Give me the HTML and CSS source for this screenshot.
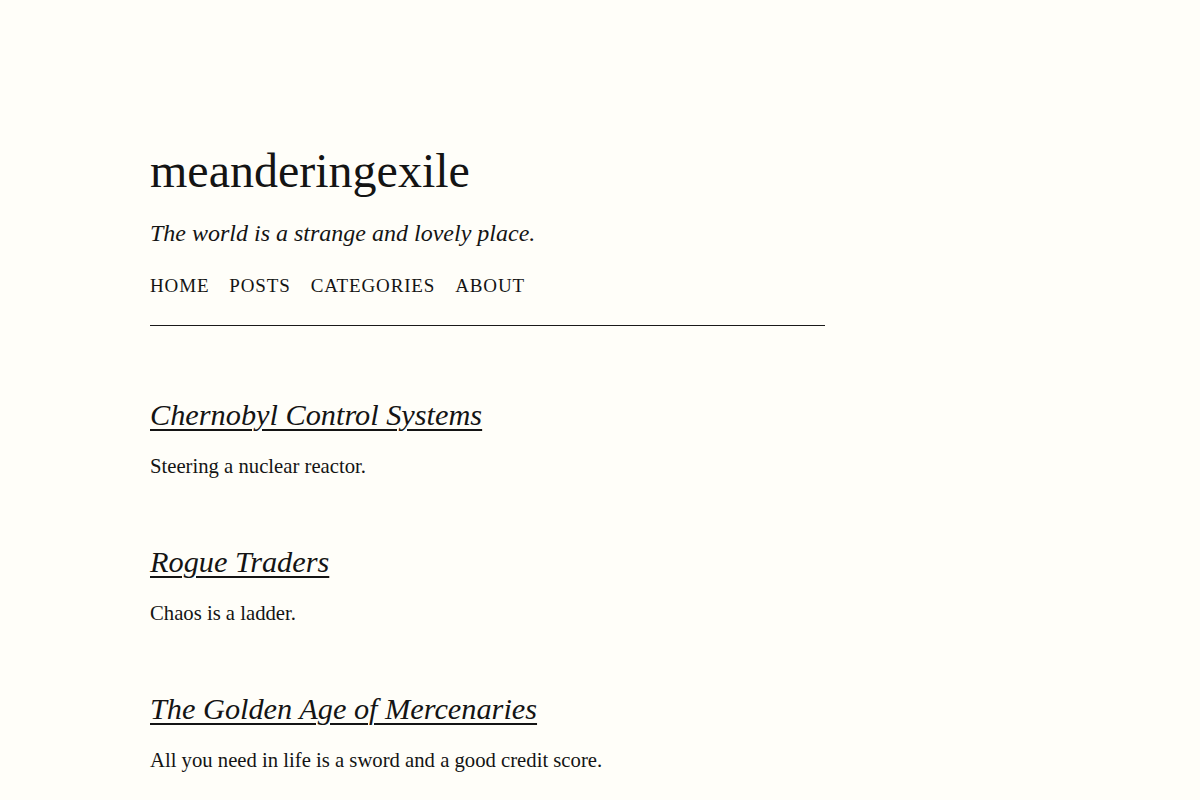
FILE: index.html
```html
<!DOCTYPE html>
<html lang="en">
<head>
<meta charset="utf-8">
<title>meanderingexile</title>
<link rel="stylesheet" href="styles.css">
</head>
<body>
<div class="page">
  <header class="site-header">
    <h1 class="site-title">meanderingexile</h1>
    <p class="tagline">The world is a strange and lovely place.</p>
    <nav class="nav">
      <a href="#">Home</a>
      <a href="#">Posts</a>
      <a href="#">Categories</a>
      <a href="#">About</a>
    </nav>
  </header>
  <main class="posts">
    <article class="post">
      <h2 class="post-title"><a href="#">Chernobyl Control Systems</a></h2>
      <p class="post-desc">Steering a nuclear reactor.</p>
    </article>
    <article class="post">
      <h2 class="post-title"><a href="#">Rogue Traders</a></h2>
      <p class="post-desc">Chaos is a ladder.</p>
    </article>
    <article class="post">
      <h2 class="post-title"><a href="#">The Golden Age of Mercenaries</a></h2>
      <p class="post-desc">All you need in life is a sword and a good credit score.</p>
    </article>
  </main>
</div>
</body>
</html>
```
FILE: styles.css
```css
html, body {
  margin: 0;
  padding: 0;
  background: #fffef9;
  color: #141414;
  font-family: "Liberation Serif", "Times New Roman", serif;
}
.page {
  width: 675px;
  padding: 142px 0 0 150px;
}
.site-header {
  border-bottom: 1px solid #1a1a1a;
  padding-bottom: 27px;
}
.site-title {
  margin: 0;
  font-size: 48px;
  font-weight: normal;
  line-height: 58px;
}
.tagline {
  margin: 17px 0 0;
  font-size: 24px;
  font-style: italic;
  line-height: 32px;
}
.nav {
  display: flex;
  gap: 20px;
  margin-top: 25px;
  line-height: 24px;
}
.nav a {
  color: #141414;
  text-decoration: none;
  text-transform: uppercase;
  font-size: 19px;
  letter-spacing: 0.85px;
}
.posts {
  padding-top: 69px;
}
.post {
  margin-bottom: 62px;
}
.post-title {
  margin: 0;
  font-size: 30.3px;
  font-weight: normal;
  font-style: italic;
  line-height: 40px;
}
.post-title a {
  color: #141414;
  text-decoration: underline;
  text-decoration-thickness: 2px;
  text-underline-offset: 4px;
}
.post-desc {
  margin: 17px 0 0;
  font-size: 20.7px;
  line-height: 28px;
}
```
